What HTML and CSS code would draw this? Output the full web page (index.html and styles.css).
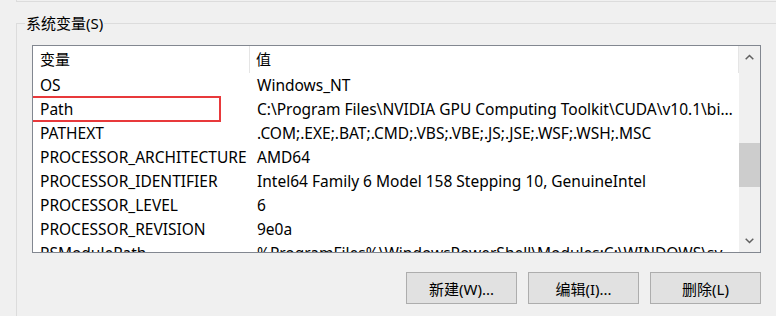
FILE: index.html
```html
<!DOCTYPE html>
<html lang="zh-CN">
<head>
<meta charset="utf-8">
<title>系统变量</title>
<link rel="stylesheet" href="styles.css">
</head>
<body>
<div class="prev-group"></div>
<div class="group">
  <span class="group-title">系统变量(S)</span>
  <div class="list">
    <div class="table">
      <div class="row head">
        <div class="c1">变量</div>
        <div class="c2">值</div>
      </div>
      <div class="row"><div class="c1">OS</div><div class="c2">Windows_NT</div></div>
      <div class="row marked"><div class="c1">Path</div><div class="c2">C:\Program Files\NVIDIA GPU Computing Toolkit\CUDA\v10.1\bin;C:\Program Files\NVIDIA GPU Computing Toolkit\CUDA\v10.1\libnvvp</div></div>
      <div class="row"><div class="c1">PATHEXT</div><div class="c2">.COM;.EXE;.BAT;.CMD;.VBS;.VBE;.JS;.JSE;.WSF;.WSH;.MSC</div></div>
      <div class="row"><div class="c1">PROCESSOR_ARCHITECTURE</div><div class="c2">AMD64</div></div>
      <div class="row"><div class="c1">PROCESSOR_IDENTIFIER</div><div class="c2">Intel64 Family 6 Model 158 Stepping 10, GenuineIntel</div></div>
      <div class="row"><div class="c1">PROCESSOR_LEVEL</div><div class="c2">6</div></div>
      <div class="row"><div class="c1">PROCESSOR_REVISION</div><div class="c2">9e0a</div></div>
      <div class="row"><div class="c1">PSModulePath</div><div class="c2">%ProgramFiles%\WindowsPowerShell\Modules;C:\WINDOWS\system32\WindowsPowerShell\v1.0\Modules</div></div>
    </div>
    <div class="scrollbar">
      <div class="arrow">
        <svg width="9" height="6" viewBox="0 0 9 6"><path d="M0.7 5.3 L4.5 1.5 L8.3 5.3" fill="none" stroke="#606060" stroke-width="1.5"/></svg>
      </div>
      <div class="track">
        <div class="thumb"></div>
      </div>
      <div class="arrow">
        <svg width="9" height="6" viewBox="0 0 9 6"><path d="M0.7 0.7 L4.5 4.5 L8.3 0.7" fill="none" stroke="#606060" stroke-width="1.5"/></svg>
      </div>
    </div>
  </div>
  <div class="buttons">
    <button class="btn">新建(W)...</button>
    <button class="btn">编辑(I)...</button>
    <button class="btn">删除(L)</button>
  </div>
</div>
</body>
</html>
```
FILE: styles.css
```css
html, body {
  margin: 0;
  padding: 0;
}
body {
  width: 776px;
  height: 316px;
  overflow: hidden;
  background: #f0f0f0;
  font-family: "Noto Sans", "Noto Sans CJK SC", sans-serif;
  font-size: 15px;
  color: #000;
}
.prev-group {
  margin-left: 16px;
  height: 1px;
  border-left: 1px solid #dcdcdc;
  border-bottom: 1px solid #dcdcdc;
}
.group {
  position: relative;
  box-sizing: border-box;
  margin-top: 21px;
  margin-left: 16px;
  border-top: 1px solid #dcdcdc;
  border-left: 1px solid #dcdcdc;
  padding: 21px 15px 0 15px;
  height: 293px;
}
.group-title {
  position: absolute;
  left: 8px;
  top: -12px;
  padding: 0 1px;
  background: #f0f0f0;
  line-height: 22px;
}
.list {
  width: 727px;
  height: 206px;
  border: 1px solid #828790;
  background: #fff;
  display: flex;
  overflow: hidden;
}
.table {
  flex: 1;
  min-width: 0;
  overflow: hidden;
  font-size: 15.5px;
}
.row {
  position: relative;
  display: flex;
  height: 24px;
  line-height: 24px;
}
.row.head {
  height: 27px;
  line-height: 26px;
  font-size: 15px;
}
.row.marked::after {
  content: "";
  position: absolute;
  left: -4px;
  top: -1px;
  width: 188px;
  height: 22px;
  border: 2px solid #e8393b;
}
.c1 {
  width: 217px;
  flex: none;
  padding-left: 7px;
  box-sizing: border-box;
  white-space: nowrap;
  overflow: hidden;
}
.c2 {
  flex: 1;
  min-width: 0;
  padding-left: 7px;
  padding-right: 4px;
  white-space: nowrap;
  overflow: hidden;
  text-overflow: ellipsis;
}
.head .c1 {
  border-right: 1px solid #e5e5e5;
}
.head .c2 {
  border-right: 1px solid #e5e5e5;
  padding-left: 6px;
}
.scrollbar {
  width: 21px;
  flex: none;
  background: #f0f0f0;
  display: flex;
  flex-direction: column;
}
.arrow {
  height: 22px;
  display: flex;
  align-items: center;
  justify-content: center;
}
.track {
  flex: 1;
  padding-top: 75px;
}
.thumb {
  height: 44px;
  background: #cdcdcd;
}
.buttons {
  width: 729px;
  display: flex;
  justify-content: flex-end;
  gap: 11px;
  margin-top: 19px;
}
.btn {
  width: 111px;
  height: 32px;
  border: 1px solid #adadad;
  background: #e1e1e1;
  font-family: "Noto Sans", "Noto Sans CJK SC", sans-serif;
  font-size: 15px;
  color: #000;
  padding: 0;
}
```
